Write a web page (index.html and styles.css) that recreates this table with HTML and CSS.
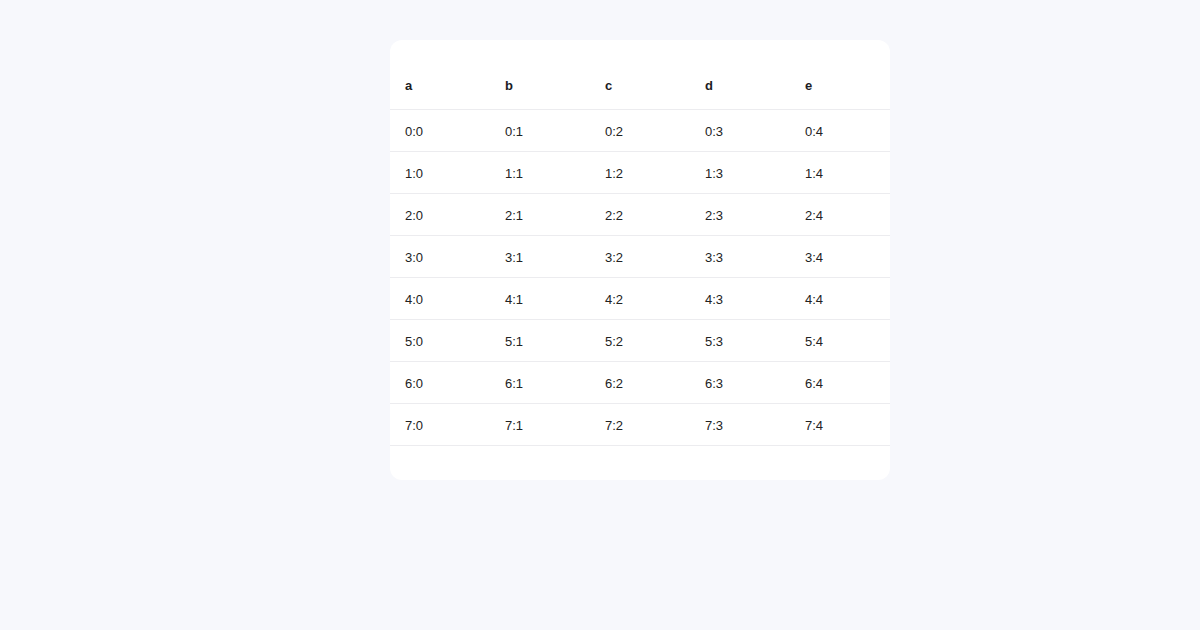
FILE: index.html
```html
<!DOCTYPE html>
<html>
<head>
<meta charset="utf-8">
<link rel="stylesheet" href="styles.css">
</head>
<body>
<div class="page">
  <div class="card">
    <table class="grid">
      <thead>
        <tr><th>a</th><th>b</th><th>c</th><th>d</th><th>e</th></tr>
      </thead>
      <tbody>
        <tr><td>0:0</td><td>0:1</td><td>0:2</td><td>0:3</td><td>0:4</td></tr>
        <tr><td>1:0</td><td>1:1</td><td>1:2</td><td>1:3</td><td>1:4</td></tr>
        <tr><td>2:0</td><td>2:1</td><td>2:2</td><td>2:3</td><td>2:4</td></tr>
        <tr><td>3:0</td><td>3:1</td><td>3:2</td><td>3:3</td><td>3:4</td></tr>
        <tr><td>4:0</td><td>4:1</td><td>4:2</td><td>4:3</td><td>4:4</td></tr>
        <tr><td>5:0</td><td>5:1</td><td>5:2</td><td>5:3</td><td>5:4</td></tr>
        <tr><td>6:0</td><td>6:1</td><td>6:2</td><td>6:3</td><td>6:4</td></tr>
        <tr><td>7:0</td><td>7:1</td><td>7:2</td><td>7:3</td><td>7:4</td></tr>
      </tbody>
    </table>
  </div>
</div>
</body>
</html>
```
FILE: styles.css
```css
html, body {
  margin: 0;
  padding: 0;
  background: #f7f8fc;
  font-family: "Liberation Sans", Arial, sans-serif;
  color: #222;
}
.page {
  display: flex;
  justify-content: center;
  padding: 40px 0 0 80px;
}
.card {
  width: 500px;
  background: #ffffff;
  border-radius: 12px;
  padding: 24px 0 34px;
}
.grid {
  width: 500px;
  border-collapse: collapse;
  table-layout: fixed;
  font-size: 13px;
  line-height: 15px;
}
.grid th {
  text-align: left;
  font-weight: bold;
  color: #1c1c24;
  padding: 14px 15px 16px;
  border-bottom: 1px solid #ececef;
}
.grid td {
  text-align: left;
  padding: 14px 15px 12px;
  border-bottom: 1px solid #ececef;
  color: #222;
}
```
